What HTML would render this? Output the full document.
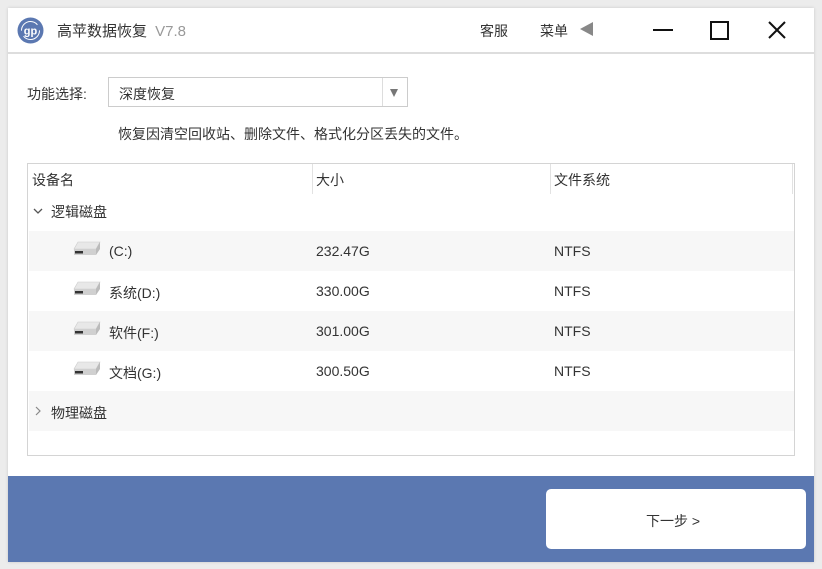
<!DOCTYPE html><html><head><meta charset="utf-8"><style>
body{margin:0;width:822px;height:569px;background:#ececec;font-family:"Liberation Sans","Noto Sans CJK SC",sans-serif;color:#333;position:relative;overflow:hidden;font-size:14px}
.win{position:absolute;left:8px;top:8px;width:806px;height:554px;background:#fff;box-shadow:0 0 3px rgba(0,0,0,.15)}
.a{position:absolute;white-space:nowrap}
.row{position:absolute;left:1px;width:765px;height:40px}
.g{background:#f7f7f7}
</style></head><body>
<div class="win">
<svg class="a" style="left:9px;top:9px" width="27" height="27" viewBox="0 0 27 27"><circle cx="13.5" cy="13.5" r="13" fill="#5b78b1"/><circle cx="13.5" cy="13.5" r="9" fill="none" stroke="#fff" stroke-width="1" stroke-dasharray="22 6"/><text x="13.5" y="17.5" text-anchor="middle" font-size="11" font-weight="bold" fill="#fff" font-family="Liberation Sans">gp</text></svg>
<div class="a" style="left:49px;top:12px;font-size:15px;color:#333">高苹数据恢复 <span style="color:#999;margin-left:4px">V7.8</span></div>
<div class="a" style="left:472px;top:13px;font-size:14px">客服</div>
<div class="a" style="left:532px;top:13px;font-size:14px">菜单</div>
<div class="a" style="left:572px;top:14px;width:0;height:0;border-top:7px solid transparent;border-bottom:7px solid transparent;border-right:13px solid #888"></div>
<div class="a" style="left:645px;top:21px;width:20px;height:2px;background:#111"></div>
<div class="a" style="left:702px;top:13px;width:15px;height:15px;border:2px solid #111"></div>
<svg class="a" style="left:760px;top:13px" width="18" height="18"><path d="M1 1L17 17M17 1L1 17" stroke="#111" stroke-width="2"/></svg>
<div class="a" style="left:0;top:44px;width:806px;height:2px;background:#ddd"></div>
<div class="a" style="left:19px;top:76px;font-size:14px">功能选择:</div>
<div class="a" style="left:100px;top:69px;width:298px;height:28px;border:1px solid #ccc"></div>
<div class="a" style="left:111px;top:76px;font-size:14px">深度恢复</div>
<div class="a" style="left:374px;top:70px;width:1px;height:28px;background:#ddd"></div>
<div class="a" style="left:382px;top:81px;width:0;height:0;border-left:4px solid transparent;border-right:4px solid transparent;border-top:8px solid #777"></div>
<div class="a" style="left:110px;top:116px;font-size:14px">恢复因清空回收站、删除文件、格式化分区丢失的文件。</div>
<div class="a" style="left:19px;top:155px;width:766px;height:291px;border:1px solid #d4d4d4">
<div class="a" style="left:4px;top:6px">设备名</div>
<div class="a" style="left:284px;top:0;width:1px;height:30px;background:#e2e2e2"></div>
<div class="a" style="left:288px;top:6px">大小</div>
<div class="a" style="left:522px;top:0;width:1px;height:30px;background:#e2e2e2"></div>
<div class="a" style="left:526px;top:6px">文件系统</div>
<div class="a" style="left:764px;top:0;width:1px;height:30px;background:#e2e2e2"></div>
<svg class="a" style="left:5px;top:43px" width="10" height="8"><path d="M1 2L5 6L9 2" stroke="#555" fill="none" stroke-width="1.3"/></svg>
<div class="a" style="left:23px;top:38px">逻辑磁盘</div>
<div class="row g" style="top:67px"></div><div class="row" style="top:107px"></div><div class="row g" style="top:147px"></div><div class="row" style="top:187px"></div><div class="row g" style="top:227px"></div>
</div>
<div class="a" style="left:0;top:468px;width:806px;height:86px;background:#5b78b1"></div>
<div class="a" style="left:538px;top:481px;width:260px;height:60px;background:#fff;border-radius:5px"></div>
<div class="a" style="left:638px;top:503px;font-size:14px;color:#333">下一步 &gt;</div>
</div>
<div style="position:absolute;left:0;top:0">
<svg class="a" style="left:72px;top:241px" width="30" height="16" viewBox="0 0 30 16"><path d="M6 1H28L24 8H2Z" fill="#e8e8e8" stroke="#ccc" stroke-width=".6"/><path d="M2 8H24V14H2Z" fill="#d0d0d0"/><path d="M24 8L28 1V8L24 14Z" fill="#bbb"/><rect x="3" y="10" width="8" height="2.5" fill="#333"/></svg>
<div class="a" style="left:109px;top:243px">(C:)</div><div class="a" style="left:316px;top:243px">232.47G</div><div class="a" style="left:554px;top:243px">NTFS</div>
<svg class="a" style="left:72px;top:281px" width="30" height="16" viewBox="0 0 30 16"><path d="M6 1H28L24 8H2Z" fill="#e8e8e8" stroke="#ccc" stroke-width=".6"/><path d="M2 8H24V14H2Z" fill="#d0d0d0"/><path d="M24 8L28 1V8L24 14Z" fill="#bbb"/><rect x="3" y="10" width="8" height="2.5" fill="#333"/></svg>
<div class="a" style="left:109px;top:283px">系统(D:)</div><div class="a" style="left:316px;top:283px">330.00G</div><div class="a" style="left:554px;top:283px">NTFS</div>
<svg class="a" style="left:72px;top:321px" width="30" height="16" viewBox="0 0 30 16"><path d="M6 1H28L24 8H2Z" fill="#e8e8e8" stroke="#ccc" stroke-width=".6"/><path d="M2 8H24V14H2Z" fill="#d0d0d0"/><path d="M24 8L28 1V8L24 14Z" fill="#bbb"/><rect x="3" y="10" width="8" height="2.5" fill="#333"/></svg>
<div class="a" style="left:109px;top:323px">软件(F:)</div><div class="a" style="left:316px;top:323px">301.00G</div><div class="a" style="left:554px;top:323px">NTFS</div>
<svg class="a" style="left:72px;top:361px" width="30" height="16" viewBox="0 0 30 16"><path d="M6 1H28L24 8H2Z" fill="#e8e8e8" stroke="#ccc" stroke-width=".6"/><path d="M2 8H24V14H2Z" fill="#d0d0d0"/><path d="M24 8L28 1V8L24 14Z" fill="#bbb"/><rect x="3" y="10" width="8" height="2.5" fill="#333"/></svg>
<div class="a" style="left:109px;top:363px">文档(G:)</div><div class="a" style="left:316px;top:363px">300.50G</div><div class="a" style="left:554px;top:363px">NTFS</div>
<svg class="a" style="left:34px;top:406px" width="8" height="10"><path d="M2 1L6 5L2 9" stroke="#888" fill="none" stroke-width="1.2"/></svg>
<div class="a" style="left:51px;top:403px">物理磁盘</div>
</div>
</body></html>
